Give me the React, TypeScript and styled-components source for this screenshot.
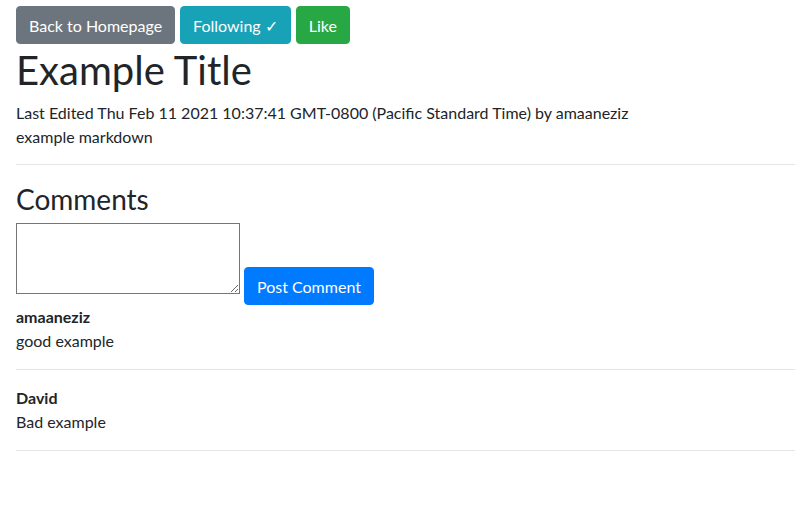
import React from "react";
import styled, { createGlobalStyle } from "styled-components";

const Global = createGlobalStyle`
  html, body { margin: 0; padding: 0; background: #fff; }
  body {
    font-family: Lato, "Open Sans", "Liberation Sans", sans-serif;
    font-size: 16px;
    line-height: 1.5;
    color: #212529;
  }
  * { box-sizing: border-box; }
`;

const Page = styled.div`
  padding: 6px 0 0 16px;
`;

const Toolbar = styled.div`
  display: flex;
  gap: 5px;
`;

const Button = styled.button<{ $bg: string }>`
  font-family: inherit;
  font-size: 16px;
  line-height: 24px;
  padding: 7px 12px 5px;
  border: 1px solid ${(p) => p.$bg};
  border-radius: 4px;
  background: ${(p) => p.$bg};
  color: #fff;
  cursor: pointer;
  white-space: nowrap;
`;

const Title = styled.h1`
  margin: 0 0 6px;
  padding-top: 2px;
  font-size: 40px;
  font-weight: 400;
  line-height: 48px;
`;

const Meta = styled.p`
  margin: 0;
  padding-top: 1px;
  margin-bottom: -1px;
`;

const Divider = styled.hr`
  margin: 16px 0;
  border: 0;
  border-top: 1px solid rgba(0, 0, 0, 0.1);
`;

const SectionTitle = styled.h3`
  margin: 0 0 6px;
  padding-top: 2px;
  font-size: 28px;
  font-weight: 400;
  line-height: 1.2;
`;

const CommentForm = styled.div`
  display: flex;
  align-items: flex-start;
  gap: 4px;
`;

const TextArea = styled.textarea`
  width: 224px;
  height: 71px;
  margin: 0;
  border: 1px solid #767676;
  padding: 2px;
  font-family: inherit;
  font-size: 13px;
`;

const PostButton = styled(Button)`
  margin-top: 44px;
`;

const CommentList = styled.div``;

const Author = styled.div`
  font-weight: 700;
`;

const Body = styled.div``;

const comments = [
  { author: "amaaneziz", body: "good example" },
  { author: "David", body: "Bad example" },
];

export default function App() {
  return (
    <>
      <Global />
      <Page>
        <Toolbar>
          <Button $bg="#6c757d">Back to Homepage</Button>
          <Button $bg="#17a2b8">Following ✓</Button>
          <Button $bg="#28a745">Like</Button>
        </Toolbar>
        <Title>Example Title</Title>
        <Meta>
          Last Edited Thu Feb 11 2021 10:37:41 GMT-0800 (Pacific Standard Time) by amaaneziz
        </Meta>
        <Meta>example markdown</Meta>
        <Divider />
        <SectionTitle>Comments</SectionTitle>
        <CommentForm>
          <TextArea />
          <PostButton $bg="#007bff">Post Comment</PostButton>
        </CommentForm>
        <CommentList>
          {comments.map((c) => (
            <div key={c.author}>
              <Author>{c.author}</Author>
              <Body>{c.body}</Body>
              <Divider />
            </div>
          ))}
        </CommentList>
      </Page>
    </>
  );
}
